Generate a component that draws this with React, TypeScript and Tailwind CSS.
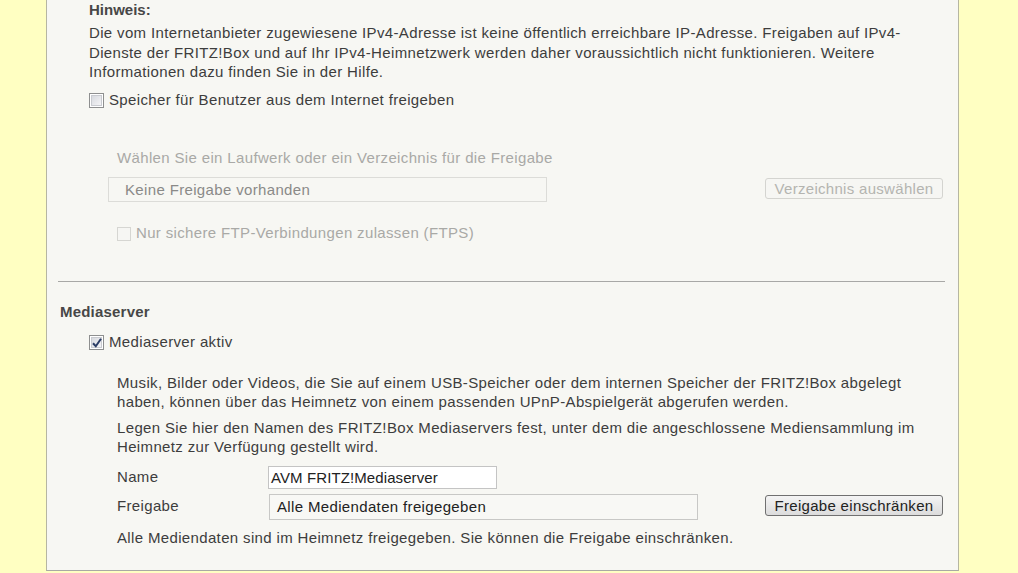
import React from 'react';

const font = { fontFamily: '"Liberation Sans", Arial, sans-serif' };

function Checkbox({ checked = false, disabled = false }: { checked?: boolean; disabled?: boolean }) {
  if (disabled) {
    return <span className="inline-block w-[14px] h-[14px] border border-[#d6d6d2] bg-[#f6f6f3] shrink-0" />;
  }
  return (
    <span className="inline-flex items-center justify-center w-[15px] h-[15px] border border-[#8e8f8f] bg-white shrink-0">
      <span className="flex items-center justify-center w-[11px] h-[11px] border border-[#c9cbd0] bg-gradient-to-br from-[#d8dadf] to-[#f4f4f6]">
        {checked && (
          <svg width="10" height="10" viewBox="0 0 10 10" className="overflow-visible">
            <path d="M1 5.2 L3.8 8.2 L9 0.8" fill="none" stroke="#2c3e66" strokeWidth="2" />
          </svg>
        )}
      </span>
    </span>
  );
}

function Button({ children, disabled = false }: { children: React.ReactNode; disabled?: boolean }) {
  return (
    <button
      className={
        disabled
          ? 'h-[21px] w-[178px] px-1 leading-[19px] text-[15px] text-[#b4b4b0] border border-[#d4d4d0] rounded-[3px] bg-[#f6f6f3] shrink-0 tracking-[0.3px]'
          : 'h-[21px] w-[178px] px-1 leading-[19px] text-[15px] text-[#222] border border-[#707070] rounded-[3px] bg-gradient-to-b from-[#f4f4f4] to-[#dcdcdc] shrink-0 tracking-[0.3px]'
      }
    >
      {children}
    </button>
  );
}

export default function App() {
  return (
    <div
      className="w-[1018px] h-[573px] overflow-hidden bg-[#ffffc2] text-[15px] text-[#3d3d3d] tracking-[0.35px]"
      style={font}
    >
      <div className="ml-[46px] w-[913px] border-l border-r border-b border-l-[#b6b6a2] border-r-[#b6b6a2] border-b-[#a9a9a4] bg-[#f7f7f3] pb-[22px]">
        {/* Internet section */}
        <div className="pl-[42px] pr-[15px]">
          <div className="font-bold leading-[20px] text-[#474747] tracking-normal">Hinweis:</div>
          <p className="mt-[3px] leading-[19.5px] whitespace-nowrap">
            Die vom Internetanbieter zugewiesene IPv4-Adresse ist keine öffentlich erreichbare IP-Adresse. Freigaben auf IPv4-
            <br />
            Dienste der FRITZ!Box und auf Ihr IPv4-Heimnetzwerk werden daher voraussichtlich nicht funktionieren. Weitere
            <br />
            Informationen dazu finden Sie in der Hilfe.
          </p>
          <label className="mt-[9px] flex items-center gap-[5px] h-[20px]">
            <Checkbox />
            <span>Speicher für Benutzer aus dem Internet freigeben</span>
          </label>

          <div className="ml-[19px] text-[#a9a9a6]">
            <div className="mt-[37px] pl-[9px] leading-[20px]">Wählen Sie ein Laufwerk oder ein Verzeichnis für die Freigabe</div>
            <div className="mt-[9px] flex items-center">
              <div className="w-[439px] h-[25px] border border-[#dcdcd8] pl-[16px] leading-[23px] text-[#8a8a88]">
                Keine Freigabe vorhanden
              </div>
              <div className="ml-auto">
                <Button disabled>Verzeichnis auswählen</Button>
              </div>
            </div>
            <label className="mt-[22px] ml-[9px] flex items-center gap-[5px] h-[20px]">
              <Checkbox disabled />
              <span>Nur sichere FTP-Verbindungen zulassen (FTPS)</span>
            </label>
          </div>
        </div>

        <div className="mt-[37px] ml-[11px] mr-[13px] border-t border-[#a8a8a6]" />

        {/* Mediaserver section */}
        <div className="pl-[13px] pr-[15px]">
          <div className="mt-[20px] font-bold leading-[20px] text-[#474747] tracking-[0.2px]">Mediaserver</div>
          <label className="mt-[11px] ml-[29px] flex items-center gap-[5px] h-[20px]">
            <Checkbox checked />
            <span>Mediaserver aktiv</span>
          </label>

          <div className="ml-[57px]">
            <p className="mt-[20px] leading-[19.5px] whitespace-nowrap">
              Musik, Bilder oder Videos, die Sie auf einem USB-Speicher oder dem internen Speicher der FRITZ!Box abgelegt
              <br />
              haben, können über das Heimnetz von einem passenden UPnP-Abspielgerät abgerufen werden.
            </p>
            <p className="mt-[6px] leading-[19.5px] whitespace-nowrap">
              Legen Sie hier den Namen des FRITZ!Box Mediaservers fest, unter dem die angeschlossene Mediensammlung im
              <br />
              Heimnetz zur Verfügung gestellt wird.
            </p>

            <div className="mt-[9px] flex items-center h-[24px]">
              <span className="w-[151px] shrink-0">Name</span>
              <div className="w-[229px] h-[23px] border border-[#c4c4c4] bg-white pl-[2px] leading-[21px] text-[#222] tracking-[0.1px]">
                AVM FRITZ!Mediaserver
              </div>
            </div>

            <div className="mt-[4px] flex items-center h-[26px]">
              <span className="w-[152px] shrink-0">Freigabe</span>
              <div className="w-[429px] h-[26px] border border-[#c8c8c6] bg-[#f8f8f5] pl-[7px] leading-[24px] text-[#222]">
                Alle Mediendaten freigegeben
              </div>
              <div className="ml-auto">
                <Button>Freigabe einschränken</Button>
              </div>
            </div>

            <p className="mt-[8px] leading-[20px]">
              Alle Mediendaten sind im Heimnetz freigegeben. Sie können die Freigabe einschränken.
            </p>
          </div>
        </div>
      </div>
    </div>
  );
}
